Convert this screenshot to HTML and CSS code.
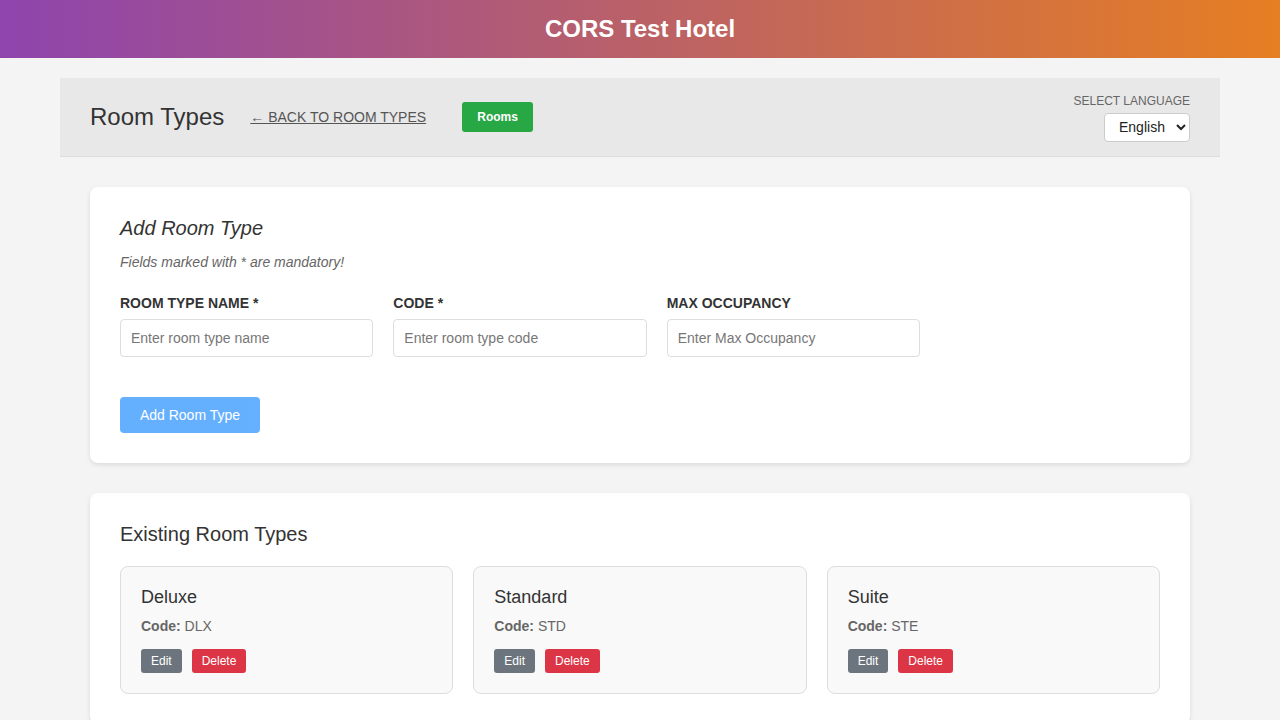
FILE: index.html
```html
<!DOCTYPE html>
<html lang="en">
<head>
<meta charset="utf-8">
<title>CORS Test Hotel - Room Types</title>
<link rel="stylesheet" href="styles.css">
</head>
<body>
<header class="site-header">
  <h1 class="site-title">CORS Test Hotel</h1>
</header>
<main class="container">
  <div class="top-bar">
    <div class="top-left">
      <h2 class="page-title">Room Types</h2>
      <a class="back-link" href="#">← BACK TO ROOM TYPES</a>
      <button class="btn-rooms" type="button">Rooms</button>
    </div>
    <div class="lang">
      <label class="lang-label" for="lang">SELECT LANGUAGE</label>
      <select id="lang" class="lang-select">
        <option>English</option>
      </select>
    </div>
  </div>

  <section class="card form-card">
    <h3 class="form-title">Add Room Type</h3>
    <p class="note">Fields marked with * are mandatory!</p>
    <div class="form-grid">
      <div class="field">
        <label class="field-label">ROOM TYPE NAME *</label>
        <input class="field-input" type="text" placeholder="Enter room type name">
      </div>
      <div class="field">
        <label class="field-label">CODE *</label>
        <input class="field-input" type="text" placeholder="Enter room type code">
      </div>
      <div class="field">
        <label class="field-label">MAX OCCUPANCY</label>
        <input class="field-input" type="text" placeholder="Enter Max Occupancy">
      </div>
    </div>
    <button class="btn-add" type="button" disabled>Add Room Type</button>
  </section>

  <section class="card list-card">
    <h3 class="list-title">Existing Room Types</h3>
    <div class="type-grid">
      <div class="type-card">
        <h4 class="type-name">Deluxe</h4>
        <p class="type-code"><strong>Code:</strong> DLX</p>
        <div class="actions">
          <button class="btn-sm btn-edit" type="button">Edit</button>
          <button class="btn-sm btn-delete" type="button">Delete</button>
        </div>
      </div>
      <div class="type-card">
        <h4 class="type-name">Standard</h4>
        <p class="type-code"><strong>Code:</strong> STD</p>
        <div class="actions">
          <button class="btn-sm btn-edit" type="button">Edit</button>
          <button class="btn-sm btn-delete" type="button">Delete</button>
        </div>
      </div>
      <div class="type-card">
        <h4 class="type-name">Suite</h4>
        <p class="type-code"><strong>Code:</strong> STE</p>
        <div class="actions">
          <button class="btn-sm btn-edit" type="button">Edit</button>
          <button class="btn-sm btn-delete" type="button">Delete</button>
        </div>
      </div>
    </div>
  </section>
</main>
</body>
</html>
```

FILE: styles.css
```css
* { box-sizing: border-box; }

body {
  margin: 0;
  background: #f4f4f4;
  font-family: "Liberation Sans", Arial, sans-serif;
  color: #333;
}

.site-header {
  background: linear-gradient(90deg, #8e44ad 0%, #e67e22 100%);
  height: 58px;
  display: flex;
  align-items: center;
  justify-content: center;
}

.site-title {
  margin: 0;
  color: #fff;
  font-size: 24px;
  font-weight: bold;
  line-height: 28px;
}

.container {
  width: 1160px;
  margin: 20px auto 0;
}

.top-bar {
  background: #e8e8e8;
  height: 79px;
  padding: 0 30px;
  border-bottom: 1px solid #dcdcdc;
  display: flex;
  align-items: center;
  justify-content: space-between;
}

.top-left {
  display: flex;
  align-items: center;
}

.page-title {
  margin: 0;
  font-size: 24px;
  font-weight: normal;
  color: #333;
}

.back-link {
  margin-left: 26px;
  font-size: 14px;
  color: #555;
  text-decoration: underline;
}

.btn-rooms {
  margin-left: 36px;
  height: 30px;
  width: 71px;
  background: #28a745;
  color: #fff;
  border: none;
  border-radius: 3px;
  font-family: "Liberation Sans", Arial, sans-serif;
  font-size: 12px;
  font-weight: bold;
  padding: 0;
}

.lang {
  display: flex;
  flex-direction: column;
  align-items: flex-end;
  margin-top: 1px;
}

.lang-label {
  font-size: 12px;
  color: #666;
  line-height: 14px;
  margin-bottom: 5px;
}

.lang-select {
  width: 86px;
  height: 29px;
  font-family: "Liberation Sans", Arial, sans-serif;
  font-size: 14px;
  color: #222;
  background: #fff;
  border: 1px solid #ccc;
  border-radius: 4px;
  padding: 0 4px 0 10px;
}

.card {
  background: #fff;
  border-radius: 8px;
  box-shadow: 0 2px 5px rgba(0, 0, 0, 0.1);
  margin: 30px 30px 0;
  padding: 30px;
}

.form-title {
  margin: 0;
  font-size: 20px;
  font-style: italic;
  font-weight: normal;
  line-height: 23px;
  color: #333;
}

.note {
  margin: 14px 0 0;
  font-size: 14px;
  font-style: italic;
  color: #666;
  line-height: 16px;
}

.form-grid {
  display: grid;
  grid-template-columns: repeat(3, 1fr);
  gap: 20px;
  width: 800px;
  margin-top: 25px;
}

.field {
  display: flex;
  flex-direction: column;
}

.field-label {
  font-size: 14px;
  font-weight: bold;
  color: #333;
  line-height: 16px;
  margin-bottom: 8px;
}

.field-input {
  height: 38px;
  border: 1px solid #ddd;
  border-radius: 4px;
  padding: 0 10px;
  font-family: "Liberation Sans", Arial, sans-serif;
  font-size: 14px;
}

.field-input::placeholder {
  color: #777;
}

.btn-add {
  margin-top: 40px;
  width: 140px;
  height: 36px;
  background: #007bff;
  opacity: 0.6;
  color: #fff;
  border: none;
  border-radius: 4px;
  font-family: "Liberation Sans", Arial, sans-serif;
  font-size: 14px;
  display: block;
}

.list-title {
  margin: 0;
  font-size: 20px;
  font-weight: normal;
  line-height: 23px;
  color: #333;
}

.type-grid {
  display: grid;
  grid-template-columns: repeat(3, 1fr);
  gap: 20px;
  margin-top: 20px;
}

.type-card {
  background: #f9f9f9;
  border: 1px solid #ddd;
  border-radius: 8px;
  padding: 20px;
}

.type-name {
  margin: 0;
  font-size: 18px;
  font-weight: normal;
  line-height: 21px;
  color: #333;
}

.type-code {
  margin: 10px 0 0;
  font-size: 14px;
  color: #666;
  line-height: 16px;
}

.actions {
  display: flex;
  gap: 10px;
  margin-top: 15px;
}

.btn-sm {
  height: 24px;
  border: none;
  border-radius: 3px;
  color: #fff;
  font-family: "Liberation Sans", Arial, sans-serif;
  font-size: 12px;
  padding: 0 10px;
}

.btn-edit { background: #6c757d; }
.btn-delete { background: #dc3545; }
```
